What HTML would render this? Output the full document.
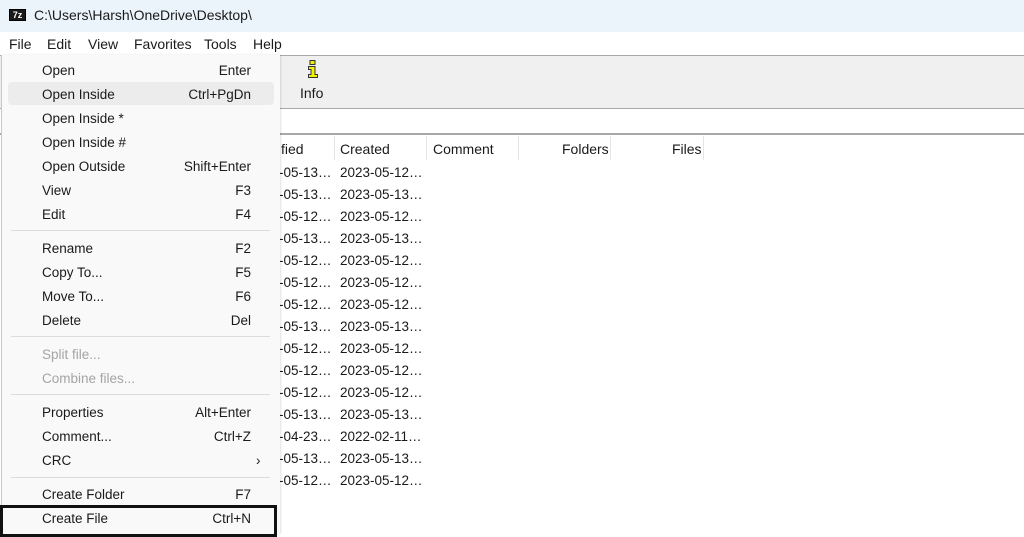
<!DOCTYPE html>
<html><head><meta charset="utf-8"><style>
*{margin:0;padding:0;box-sizing:border-box}
body{width:1024px;height:534px;overflow:hidden;background:#fff;font-family:"Liberation Sans",sans-serif;font-size:13.5px;color:#1a1a1a;position:relative}
.a{position:absolute;white-space:nowrap}
.mi{position:absolute;left:42px;line-height:20px}
.sc{position:absolute;right:773px;text-align:right;line-height:20px}
.sep{position:absolute;left:11px;width:259px;height:1px;background:#dcdcdc}
.dis{color:#a4a4a4}
</style></head><body>
<div class="a" style="left:0;top:0;width:1024px;height:32px;background:#ebf3fb"></div>
<div class="a" style="left:9px;top:9px;width:17px;height:12px;background:#1a1a1a;color:#fff;font-size:9px;font-weight:bold;line-height:10px;text-align:center;border:1px solid #000">7z</div>
<div class="a" style="left:34px;top:7px;font-size:14px">C:\Users\Harsh\OneDrive\Desktop\</div>
<div class="a" style="left:9px;top:36px;font-size:14px">File</div>
<div class="a" style="left:47px;top:36px;font-size:14px">Edit</div>
<div class="a" style="left:88px;top:36px;font-size:14px">View</div>
<div class="a" style="left:134px;top:36px;font-size:14px">Favorites</div>
<div class="a" style="left:204px;top:36px;font-size:14px">Tools</div>
<div class="a" style="left:253px;top:36px;font-size:14px">Help</div>
<div class="a" style="left:0;top:55px;width:1024px;height:54px;background:#f0f0f0;border-top:1px solid #a8a8a8;border-bottom:1px solid #a8a8a8"></div>
<svg class="a" style="left:306px;top:60px" width="14" height="18" viewBox="0 0 14 18"><rect x="4" y="0.5" width="5" height="4" fill="#f0f000" stroke="#333"/><path d="M2.5 6.5h6.5v8h2.5v3h-9v-3h2.5v-5h-2.5z" fill="#f0f000" stroke="#333"/></svg>
<div class="a" style="left:300px;top:85px;font-size:14px">Info</div>
<div class="a" style="left:0;top:133px;width:1024px;height:2px;background:#a8a8a8"></div>
<div class="a" style="left:281px;top:141px;font-size:14px">fied</div>
<div class="a" style="left:334px;top:136px;width:1px;height:24px;background:#e5e5e5"></div>
<div class="a" style="left:340px;top:141px;font-size:14px">Created</div>
<div class="a" style="left:426px;top:136px;width:1px;height:24px;background:#e5e5e5"></div>
<div class="a" style="left:433px;top:141px;font-size:14px">Comment</div>
<div class="a" style="left:518px;top:136px;width:1px;height:24px;background:#e5e5e5"></div>
<div class="a" style="left:562px;top:141px;font-size:14px">Folders</div>
<div class="a" style="left:610px;top:136px;width:1px;height:24px;background:#e5e5e5"></div>
<div class="a" style="left:672px;top:141px;font-size:14px">Files</div>
<div class="a" style="left:703px;top:136px;width:1px;height:24px;background:#e5e5e5"></div>
<div class="a" style="left:279px;top:162px;line-height:22px;font-size:13.5px">
-05-13…<br>-05-13…<br>-05-12…<br>-05-13…<br>-05-12…<br>-05-12…<br>-05-12…<br>-05-13…<br>-05-12…<br>-05-12…<br>-05-12…<br>-05-13…<br>-04-23…<br>-05-13…<br>-05-12…</div>
<div class="a" style="left:340px;top:162px;line-height:22px;font-size:13.5px">
2023-05-12…<br>2023-05-13…<br>2023-05-12…<br>2023-05-13…<br>2023-05-12…<br>2023-05-12…<br>2023-05-12…<br>2023-05-13…<br>2023-05-12…<br>2023-05-12…<br>2023-05-12…<br>2023-05-13…<br>2022-02-11…<br>2023-05-13…<br>2023-05-12…</div>
<div class="a" style="left:1px;top:55px;width:279px;height:479px;background:#f9f9f9;border-left:1px solid #c8c8c8;box-shadow:1px 0 2px rgba(0,0,0,.12)"></div>
<div class="a" style="left:8px;top:82px;width:266px;height:23px;background:#ececec;border-radius:4px"></div>
<div class="mi" style="top:61px">Open</div><div class="sc" style="top:61px">Enter</div>
<div class="mi" style="top:85px">Open Inside</div><div class="sc" style="top:85px">Ctrl+PgDn</div>
<div class="mi" style="top:109px">Open Inside *</div>
<div class="mi" style="top:133px">Open Inside #</div>
<div class="mi" style="top:157px">Open Outside</div><div class="sc" style="top:157px">Shift+Enter</div>
<div class="mi" style="top:181px">View</div><div class="sc" style="top:181px">F3</div>
<div class="mi" style="top:205px">Edit</div><div class="sc" style="top:205px">F4</div>
<div class="sep" style="top:230px"></div>
<div class="mi" style="top:239px">Rename</div><div class="sc" style="top:239px">F2</div>
<div class="mi" style="top:263px">Copy To...</div><div class="sc" style="top:263px">F5</div>
<div class="mi" style="top:287px">Move To...</div><div class="sc" style="top:287px">F6</div>
<div class="mi" style="top:311px">Delete</div><div class="sc" style="top:311px">Del</div>
<div class="sep" style="top:336px"></div>
<div class="mi dis" style="top:345px">Split file...</div>
<div class="mi dis" style="top:369px">Combine files...</div>
<div class="sep" style="top:394px"></div>
<div class="mi" style="top:403px">Properties</div><div class="sc" style="top:403px">Alt+Enter</div>
<div class="mi" style="top:427px">Comment...</div><div class="sc" style="top:427px">Ctrl+Z</div>
<div class="mi" style="top:451px">CRC</div><div class="a" style="left:256px;top:451px;line-height:20px">›</div>
<div class="sep" style="top:477px"></div>
<div class="mi" style="top:485px">Create Folder</div><div class="sc" style="top:485px">F7</div>
<div class="a" style="left:0;top:505px;width:277px;height:32px;border:3px solid #111"></div>
<div class="mi" style="top:509px">Create File</div><div class="sc" style="top:509px">Ctrl+N</div>
</body></html>
